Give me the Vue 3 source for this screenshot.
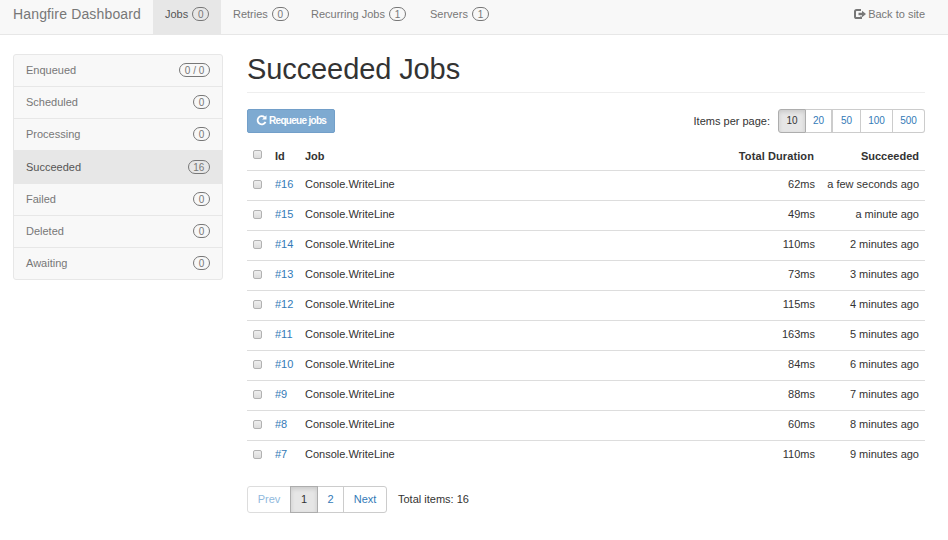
<script setup>
const navigation = [
  { title: 'Jobs', count: 0, active: true, width: 68 },
  { title: 'Retries', count: 0, width: 78 },
  { title: 'Recurring Jobs', count: 1, width: 119 },
  { title: 'Servers', count: 1, width: 82 },
]
const states = [
  { title: 'Enqueued', count: '0 / 0' },
  { title: 'Scheduled', count: '0' },
  { title: 'Processing', count: '0' },
  { title: 'Succeeded', count: '16', active: true },
  { title: 'Failed', count: '0' },
  { title: 'Deleted', count: '0' },
  { title: 'Awaiting', count: '0' },
]
const sizes = [
  { count: 10, width: 28 },
  { count: 20, width: 27 },
  { count: 50, width: 28 },
  { count: 100, width: 32 },
  { count: 500, width: 32 },
]
const durations = [62, 49, 110, 73, 115, 163, 84, 88, 60, 110]
const jobs = durations.map((duration, i) => ({
  id: 16 - i,
  duration: `${duration}ms`,
  succeeded: i === 0 ? 'a few seconds ago' : i === 1 ? 'a minute ago' : `${i} minutes ago`,
}))
</script>

<template>
  <div class="page">
    <header class="navbar">
      <a class="brand">Hangfire Dashboard</a>
      <nav class="nav">
        <a v-for="item in navigation" :key="item.title" :class="{ active: item.active }" :style="{ width: item.width + 'px' }">
          <span>{{ item.title }}</span><span class="badge">{{ item.count }}</span>
        </a>
      </nav>
      <a class="back">
        <svg width="12" height="10" viewBox="0 0 12 10">
          <path d="M7 1H2.6Q1 1 1 2.6V7.4Q1 9 2.6 9H7V7.5" fill="none" stroke="#777" stroke-width="2" />
          <path d="M4.5 3.8H8V1.7L12 5 8 8.3V6.2H4.5Z" fill="#777" />
        </svg>
        <span>Back to site</span>
      </a>
    </header>
    <div class="content">
      <aside class="sidebar">
        <a v-for="state in states" :key="state.title" :class="{ active: state.active }">
          <span>{{ state.title }}</span><span class="badge">{{ state.count }}</span>
        </a>
      </aside>
      <main>
        <h1>Succeeded Jobs</h1>
        <div class="toolbar">
          <button class="requeue" disabled>
            <svg width="11" height="11" viewBox="0 0 11 11">
              <path d="M8.6 2.3A4.1 4.1 0 1 0 9.5 6.8" fill="none" stroke="#fff" stroke-width="1.8" />
              <path d="M10.5 .2V4.6H6.1Z" fill="#fff" />
            </svg>
            <span>Requeue jobs</span>
          </button>
          <div class="per-page">
            <span class="label">Items per page:</span>
            <div class="group">
              <a v-for="size in sizes" :key="size.count" :class="{ active: size.count === 10, wide: size.count === 20 }" :style="{ width: size.width + 'px' }">{{ size.count }}</a>
            </div>
          </div>
        </div>
        <table>
          <thead>
            <tr>
              <th class="check"><span class="box"></span></th>
              <th class="id">Id</th>
              <th>Job</th>
              <th class="duration">Total Duration</th>
              <th class="time">Succeeded</th>
            </tr>
          </thead>
          <tbody>
            <tr v-for="job in jobs" :key="job.id">
              <td><span class="box"></span></td>
              <td><a class="link">#{{ job.id }}</a></td>
              <td>Console.WriteLine</td>
              <td class="duration">{{ job.duration }}</td>
              <td class="time">{{ job.succeeded }}</td>
            </tr>
          </tbody>
        </table>
        <footer>
          <div class="group pager">
            <a class="prev">Prev</a>
            <a class="active one">1</a>
            <a class="two">2</a>
            <a class="next">Next</a>
          </div>
          <span class="total">Total items: 16</span>
        </footer>
      </main>
    </div>
  </div>
</template>

<style>
body { background: #fff; }
</style>

<style scoped>
* { box-sizing: border-box; }
.page {
  height: 540px;
  overflow: hidden;
  color: #333;
  font: 11px/16px "Liberation Sans", Arial, sans-serif;
}
.navbar {
  display: flex;
  height: 35px;
  padding: 0 23px 0 13px;
  background: #f8f8f8;
  border-bottom: 1px solid #e7e7e7;
  color: #777;
}
.brand { width: 140px; padding-top: 6px; font-size: 14px; letter-spacing: .15px; white-space: nowrap; }
.nav { display: flex; }
.nav a { display: flex; gap: 4px; padding: 6px 0 0 12px; white-space: nowrap; }
.nav .badge { margin-top: 1px; }
.active { color: #555; background: #e7e7e7; }
.badge {
  height: 14px;
  min-width: 17px;
  padding: 0 4.7px;
  border: 1px solid #777;
  border-radius: 7px;
  color: #777;
  font-size: 10px;
  line-height: 13px;
  text-align: center;
}
.back { display: flex; gap: 2px; margin-left: auto; padding-top: 6px; }
.back svg { margin-top: 3px; }
.content { display: flex; gap: 24px; padding: 19px 23px 0 13px; }
.sidebar {
  flex: none;
  width: 210px;
  align-self: flex-start;
  border: 1px solid #e7e7e7;
  border-radius: 3px;
  background: #f8f8f8;
  color: #777;
}
.sidebar a {
  display: flex;
  align-items: center;
  justify-content: space-between;
  height: 32px;
  padding: 0 12px 1px;
  border-bottom: 1px solid #e7e7e7;
}
.sidebar a.active { height: 33px; padding-bottom: 0; }
.sidebar a:last-child { height: 31px; border: 0; }
main { flex: 1; }
h1 {
  height: 39px;
  margin: 0;
  border-bottom: 1px solid #eee;
  font-size: 29px;
  font-weight: 400;
  letter-spacing: -.1px;
  line-height: 31px;
}
.toolbar { display: flex; justify-content: space-between; margin-top: 16px; height: 24px; }
.requeue {
  display: flex;
  align-items: center;
  gap: 2px;
  width: 88px;
  padding: 0 0 0 8px;
  border: 1px solid #729fc9;
  border-radius: 2px;
  background: #7eaad1;
  color: #fff;
  font: bold 10px/14px "Liberation Sans", Arial, sans-serif;
  letter-spacing: -.7px;
  white-space: nowrap;
}
.requeue svg { margin-bottom: 1px; }
.per-page { display: flex; align-items: center; gap: 8px; }
.label { padding-bottom: 1px; }
.group { display: flex; height: 24px; }
.group a {
  display: flex;
  align-items: center;
  justify-content: center;
  margin-right: -1px;
  border: 1px solid #ccc;
  color: #337ab7;
  font-size: 10px;
}
.per-page .group a { margin-right: 0; border-left-width: 0; }
.per-page .group a:first-child { border-left-width: 1px; }
.per-page .group a.wide { width: 28px; border-right-width: 2px; }
.group a:first-child { border-radius: 3px 0 0 3px; }
.group a:last-child { border-radius: 0 3px 3px 0; margin-right: 0; }
.group a.active {
  z-index: 1;
  border-color: #adadad;
  background: #e6e6e6;
  box-shadow: inset 0 2px 4px rgba(0, 0, 0, .125);
  color: #333;
}
table { width: 100%; margin-top: 9px; border-collapse: separate; border-spacing: 0; table-layout: fixed; }
th, td { height: 30px; padding: 0 6px 3px; text-align: left; white-space: nowrap; }
th { height: 29px; padding-bottom: 0; border-bottom: 1px solid #ddd; }
td { border-bottom: 1px solid #ddd; }
tbody tr:last-child td { border-bottom-color: transparent; }
.check { width: 22px; }
.id { width: 30px; }
.duration { width: 107px; text-align: right; }
th.duration { padding-right: 7px; letter-spacing: .1px; }
.time { width: 104px; text-align: right; }
.link { color: #337ab7; }
.box {
  display: block;
  width: 9px;
  height: 9px;
  border: 1px solid #b2b2b2;
  border-radius: 2px;
  background: linear-gradient(#eee, #ddd);
}
th .box { margin-top: -3px; }
td .box { margin-top: 1px; }
footer { display: flex; align-items: center; gap: 11px; margin-top: 15px; }
.total { padding-bottom: 2px; }
.pager { height: 27px; }
.pager a { padding-bottom: 1px; font-size: 11px; }
.pager .prev { width: 44px; color: #90b9dd; border-color: #ddd; }
.one { width: 28px; }
.two { width: 27px; }
.next { width: 44px; }
</style>
